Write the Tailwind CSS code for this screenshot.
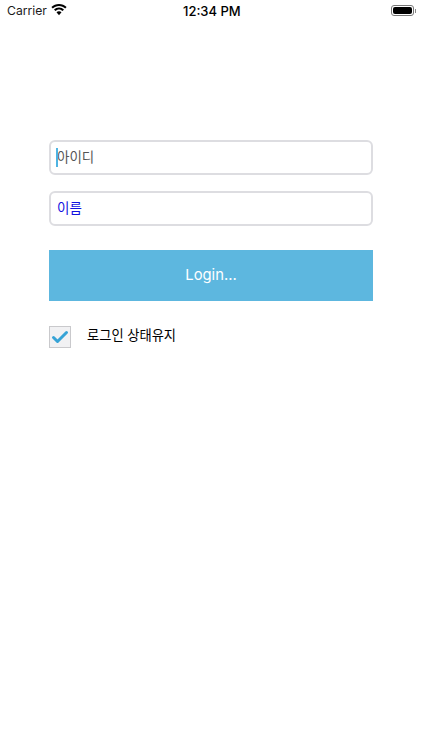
<!DOCTYPE html>
<html lang="ko">
<head>
<meta charset="utf-8">
<script src="https://cdn.jsdelivr.net/npm/@tailwindcss/browser@4"></script>
</head>
<body class="bg-white">
<div class="w-[422px] h-[750px] bg-white flex flex-col overflow-hidden font-['Inter','Noto_Sans_CJK_KR','Noto_Sans',sans-serif]">
  <div class="h-[22px] relative flex items-center px-[7px] text-[13px] text-[#1a1a1a]">
    <span class="text-[12.2px] mt-[1px] font-['Inter',sans-serif]">Carrier</span>
    <svg class="absolute left-[51px] top-[4px]" width="16" height="12" viewBox="0 0 16 12" fill="#000">
      <path d="M8 0C5.1 0 2.4 1.1.4 3.1l1.4 1.5C3.4 3 5.6 2.1 8 2.1s4.6.9 6.2 2.5l1.4-1.5C13.6 1.1 10.9 0 8 0z"/>
      <path d="M8 3.6c-1.9 0-3.7.8-5 2l1.4 1.5c1-.9 2.2-1.5 3.6-1.5s2.6.6 3.6 1.5L13 5.6c-1.3-1.2-3.1-2-5-2z"/>
      <path d="M8 7.2c-1 0-1.9.4-2.5 1L8 11.2l2.5-3c-.6-.6-1.5-1-2.5-1z"/>
    </svg>
    <span class="absolute left-[183px] top-[2px] text-[13px] font-medium text-black">12:34 PM</span>
    <div class="absolute left-[391px] top-[5px] flex items-center">
      <div class="w-[23px] h-[11px] rounded-[3px] border border-[#777] p-[1px]">
        <div class="w-full h-full rounded-[2px] bg-black"></div>
      </div>
      <div class="w-[1px] h-[4px] ml-[1px] bg-[#888]"></div>
    </div>
  </div>

  <div class="mt-[118px] mx-[49px] w-[324px] flex flex-col">
    <div class="h-[35px] rounded-[6px] border-2 border-[#dddde1] flex items-center pl-[6px] text-[13.5px] text-[#555] relative">
      <span class="mb-[1px]">아이디</span>
      <div class="absolute left-[5px] top-[6px] w-[2px] h-[19px] bg-[#4fb4e2]"></div>
    </div>
    <div class="mt-[16px] h-[35px] rounded-[6px] border-2 border-[#dddde1] flex items-center pl-[6px] text-[13.5px] text-[#1212e0]"><span class="mb-[1px]">이름</span></div>
    <div class="mt-[24px] h-[51px] bg-[#5db7df] flex items-center justify-center text-[14.8px] text-white">Login...</div>
    <div class="mt-[25px] flex items-center">
      <div class="w-[22px] h-[22px] bg-[#f1f1f3] border border-[#c9c9cc] flex items-center justify-center">
        <svg width="18" height="14" viewBox="0 0 18 14" fill="none" stroke="#36a3d6" stroke-width="3" stroke-linecap="round" stroke-linejoin="round"><path d="M2.5 7.5 6.5 11.5 15.5 2.5"/></svg>
      </div>
      <span class="ml-[16px] mb-[2px] text-[13.25px] text-black">로그인 상태유지</span>
    </div>
  </div>
</div>
</body>
</html>
